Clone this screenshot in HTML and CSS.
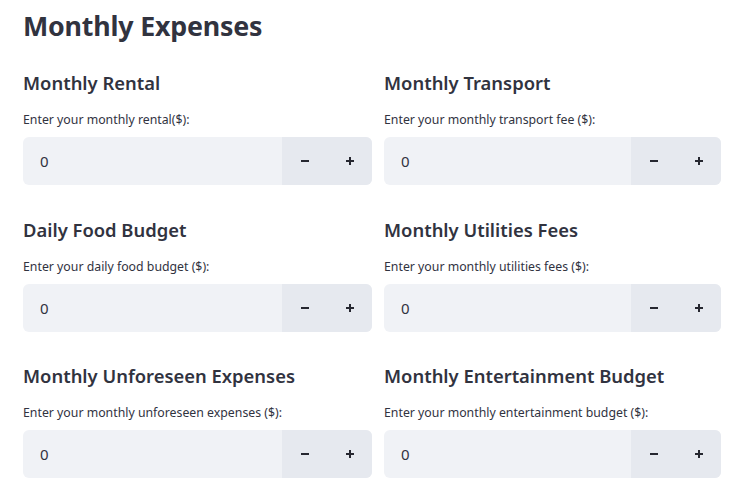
FILE: index.html
```html
<!DOCTYPE html>
<html>
<head>
<meta charset="utf-8">
<link rel="stylesheet" href="styles.css">
</head>
<body>
<main class="page">
  <h1 class="title">Monthly Expenses</h1>
  <div class="grid">
    <section class="field">
      <h3 class="field-title">Monthly Rental</h3>
      <label class="field-label">Enter your monthly rental($):</label>
      <div class="number-input">
        <span class="value">0</span>
        <div class="steps"><span class="step minus"></span><span class="step plus"></span></div>
      </div>
    </section>
    <section class="field">
      <h3 class="field-title">Monthly Transport</h3>
      <label class="field-label">Enter your monthly transport fee ($):</label>
      <div class="number-input">
        <span class="value">0</span>
        <div class="steps"><span class="step minus"></span><span class="step plus"></span></div>
      </div>
    </section>
    <section class="field">
      <h3 class="field-title">Daily Food Budget</h3>
      <label class="field-label">Enter your daily food budget ($):</label>
      <div class="number-input">
        <span class="value">0</span>
        <div class="steps"><span class="step minus"></span><span class="step plus"></span></div>
      </div>
    </section>
    <section class="field">
      <h3 class="field-title">Monthly Utilities Fees</h3>
      <label class="field-label">Enter your monthly utilities fees ($):</label>
      <div class="number-input">
        <span class="value">0</span>
        <div class="steps"><span class="step minus"></span><span class="step plus"></span></div>
      </div>
    </section>
    <section class="field">
      <h3 class="field-title">Monthly Unforeseen Expenses</h3>
      <label class="field-label">Enter your monthly unforeseen expenses ($):</label>
      <div class="number-input">
        <span class="value">0</span>
        <div class="steps"><span class="step minus"></span><span class="step plus"></span></div>
      </div>
    </section>
    <section class="field">
      <h3 class="field-title">Monthly Entertainment Budget</h3>
      <label class="field-label">Enter your monthly entertainment budget ($):</label>
      <div class="number-input">
        <span class="value">0</span>
        <div class="steps"><span class="step minus"></span><span class="step plus"></span></div>
      </div>
    </section>
  </div>
</main>
</body>
</html>
```
FILE: styles.css
```css
html, body {
  margin: 0;
  padding: 0;
  background: #ffffff;
}
body {
  font-family: "Noto Sans", "Open Sans", sans-serif;
  color: #31333f;
}
.page {
  padding: 8px 0 0 23px;
}
.title {
  margin: 0;
  font-size: 26.8px;
  font-weight: 700;
  line-height: 36px;
  letter-spacing: -0.2px;
}
.grid {
  display: grid;
  grid-template-columns: 349px 337px;
  column-gap: 12px;
  row-gap: 30.5px;
  margin-top: 25px;
}
.field {
  display: flex;
  flex-direction: column;
}
.field-title {
  margin: 0;
  font-size: 18.4px;
  font-weight: 600;
  line-height: 28px;
}
.field-label {
  margin-top: 14px;
  font-size: 12.3px;
  line-height: 18px;
  color: #31333f;
}
.number-input {
  margin-top: 8px;
  height: 48px;
  display: flex;
  background: #f0f2f6;
  border-radius: 6px;
  overflow: hidden;
}
.value {
  flex: 1;
  display: flex;
  align-items: center;
  padding-left: 17px;
  font-size: 15px;
}
.steps {
  width: 90px;
  display: flex;
  background: #e6e9ef;
}
.step {
  flex: 1;
  position: relative;
}
.step::before, .step::after {
  content: "";
  position: absolute;
  background: #262730;
}
.minus::before {
  width: 8px;
  height: 2px;
  left: 19px;
  top: 23px;
}
.plus::before {
  width: 8px;
  height: 2px;
  left: 19px;
  top: 23px;
}
.plus::after {
  width: 2px;
  height: 8px;
  left: 22px;
  top: 20px;
}
```
